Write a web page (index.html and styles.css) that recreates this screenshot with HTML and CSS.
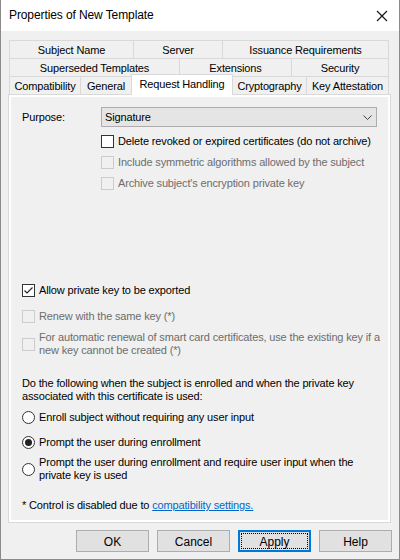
FILE: index.html
```html
<!DOCTYPE html>
<html>
<head>
<meta charset="utf-8">
<link rel="stylesheet" href="styles.css">
</head>
<body>
<div class="window">
  <div class="titlebar">
    <span class="title">Properties of New Template</span>
    <svg class="close" width="12" height="12" viewBox="0 0 12 12"><path d="M1 1 L11 11 M11 1 L1 11" stroke="#111" stroke-width="1.1" fill="none"/></svg>
  </div>
  <div class="body">
    <div class="tabs">
      <div class="tabrow">
        <div class="tab t-subject">Subject Name</div>
        <div class="tab t-server">Server</div>
        <div class="tab t-issuance">Issuance Requirements</div>
      </div>
      <div class="tabrow">
        <div class="tab t-superseded">Superseded Templates</div>
        <div class="tab t-extensions">Extensions</div>
        <div class="tab t-security">Security</div>
      </div>
      <div class="tabrow last">
        <div class="tab t-compat">Compatibility</div>
        <div class="tab t-general">General</div>
        <div class="tab t-request selected">Request Handling</div>
        <div class="tab t-crypto">Cryptography</div>
        <div class="tab t-key">Key Attestation</div>
      </div>
    </div>
    <div class="panel">
      <div class="page">
        <div class="purpose">
          <span class="plabel">Purpose:</span>
          <div class="select">
            <span>Signature</span>
            <svg class="chev" width="9" height="5" viewBox="0 0 9 5"><path d="M0.5 0.5 L4.5 4.5 L8.5 0.5" stroke="#444" stroke-width="1" fill="none"/></svg>
          </div>
        </div>
        <div class="indent">
          <div class="check row-cb1"><span class="box"></span><span>Delete revoked or expired certificates (do not archive)</span></div>
          <div class="check disabled row-8"><span class="box"></span><span>Include symmetric algorithms allowed by the subject</span></div>
          <div class="check disabled row-8"><span class="box"></span><span>Archive subject's encryption private key</span></div>
        </div>
        <div class="check row-allow"><span class="box"><svg width="11" height="11" viewBox="0 0 11 11"><path d="M1.5 5.5 L4 8 L9.5 2.5" stroke="#222" stroke-width="1.1" fill="none"/></svg></span><span>Allow private key to be exported</span></div>
        <div class="check disabled row-renew"><span class="box"></span><span>Renew with the same key (*)</span></div>
        <div class="check disabled row-8"><span class="box"></span><span>For automatic renewal of smart card certificates, use the existing key if a new key cannot be created (*)</span></div>
        <p class="desc">Do the following when the subject is enrolled and when the private key associated with this certificate is used:</p>
        <div class="radio row-8"><span class="circle"></span><span>Enroll subject without requiring any user input</span></div>
        <div class="radio row-r2"><span class="circle on"></span><span>Prompt the user during enrollment</span></div>
        <div class="radio row-r3"><span class="circle"></span><span>Prompt the user during enrollment and require user input when the private key is used</span></div>
        <p class="note">* Control is disabled due to <a class="link">compatibility settings.</a></p>
      </div>
    </div>
    <div class="buttons">
      <div class="btn">OK</div>
      <div class="btn">Cancel</div>
      <div class="btn default">Apply</div>
      <div class="btn">Help</div>
    </div>
  </div>
</div>
</body>
</html>
```
FILE: styles.css
```css
* { box-sizing: border-box; }
html, body { margin: 0; padding: 0; }
body {
  width: 400px;
  height: 560px;
  font-family: "Liberation Sans", Arial, sans-serif;
  font-size: 11px;
  letter-spacing: -0.15px;
  color: #000;
  background: #fff;
}
.window {
  width: 400px;
  height: 560px;
  border: 1px solid #8a8a8a;
  border-top: none;
  display: flex;
  flex-direction: column;
  background: #f0f0f0;
}
.titlebar {
  height: 31px;
  flex: none;
  background: #fff;
  display: flex;
  align-items: center;
  justify-content: space-between;
  padding: 0 11px 0 8px;
}
.title {
  font-size: 12px;
  letter-spacing: -0.1px;
  color: #000;
  padding-bottom: 1px;
}
.close { display: block; }
.body {
  flex: 1;
  padding: 9px 0 0 0;
  display: flex;
  flex-direction: column;
}
.tabs { margin-left: 8px; }
.tabrow {
  display: flex;
  height: 18px;
}
.tabrow.last { align-items: flex-end; }
.tab {
  height: 18px;
  flex: none;
  border: 1px solid #d9d9d9;
  border-bottom: none;
  margin-right: -1px;
  background: #f0f0f0;
  text-align: center;
  line-height: 18px;
  white-space: nowrap;
}
.tabrow.last .tab { line-height: 19px; }
.tab.selected {
  height: 21px;
  margin-bottom: -1px;
  background: #fff;
  position: relative;
  z-index: 1;
  line-height: 18px;
}
.t-subject { width: 125px; }
.t-server { width: 90px; }
.t-issuance { width: 167px; }
.t-superseded { width: 171px; }
.t-extensions { width: 113px; }
.t-security { width: 98px; }
.t-compat { width: 72px; }
.t-general { width: 52px; }
.t-request { width: 102px; }
.t-crypto { width: 75px; }
.t-key { width: 83px; }

.panel {
  margin-left: 7px;
  width: 383px;
  height: 429px;
  border: 1px solid #d9d9d9;
  background: #fff;
  padding: 2px;
}
.page {
  height: 100%;
  background: #f0f0f0;
  padding: 10px 0 0 11px;
}
.purpose {
  display: flex;
  align-items: center;
  height: 20px;
}
.plabel { width: 79px; flex: none; }
.select {
  width: 276px;
  height: 20px;
  border: 1px solid #adadad;
  background: #e5e5e5;
  display: flex;
  align-items: center;
  justify-content: space-between;
  padding: 0 4px 0 3px;
}
.chev { display: block; margin-top: 1px; }
.indent { padding-left: 79px; }
.check, .radio {
  display: flex;
  align-items: center;
  line-height: 13px;
  min-height: 13px;
}
.check .box {
  width: 13px;
  height: 13px;
  flex: none;
  border: 1px solid #333;
  background: #fff;
  margin-right: 4px;
  display: flex;
  align-items: center;
  justify-content: center;
}
.check .box svg { display: block; }
.check.disabled { color: #6d6d6d; }
.check.disabled .box {
  border-color: #cccccc;
  background: #f0f0f0;
}
.check > span:last-child { padding-right: 8px; }
.row-cb1 { margin-top: 8px; }
.row-8 { margin-top: 8px; }
.row-allow { margin-top: 94px; }
.row-renew { margin-top: 13px; }
.row-r2 { margin-top: 12px; }
.row-r3 { margin-top: 7px; }
.radio .circle {
  width: 13px;
  height: 13px;
  flex: none;
  border: 1px solid #333;
  border-radius: 50%;
  background: #fff;
  margin-right: 4px;
  display: flex;
  align-items: center;
  justify-content: center;
}
.radio .circle.on::after {
  content: "";
  width: 7px;
  height: 7px;
  border-radius: 50%;
  background: #222;
}
.radio > span:last-child { padding-right: 20px; }
.desc {
  margin: 20px 20px 0 0;
  line-height: 13px;
}
.note {
  margin: 17px 0 0 0;
  line-height: 13px;
}
.link {
  color: #0066cc;
  text-decoration: underline;
}
.buttons {
  display: flex;
  justify-content: flex-end;
  gap: 8px;
  margin-top: 7px;
  padding-right: 7px;
}
.btn {
  width: 73px;
  height: 22px;
  border: 1px solid #adadad;
  background: #e1e1e1;
  display: flex;
  align-items: center;
  justify-content: center;
  font-size: 12px;
  letter-spacing: 0;
  padding-top: 1px;
}
.btn.default {
  border-color: #0078d7;
  box-shadow: inset 0 0 0 1px #0078d7;
  position: relative;
}
.btn.default::after {
  content: "";
  position: absolute;
  left: 2px;
  top: 2px;
  right: 2px;
  bottom: 2px;
  border: 1px dotted #000;
}
```
